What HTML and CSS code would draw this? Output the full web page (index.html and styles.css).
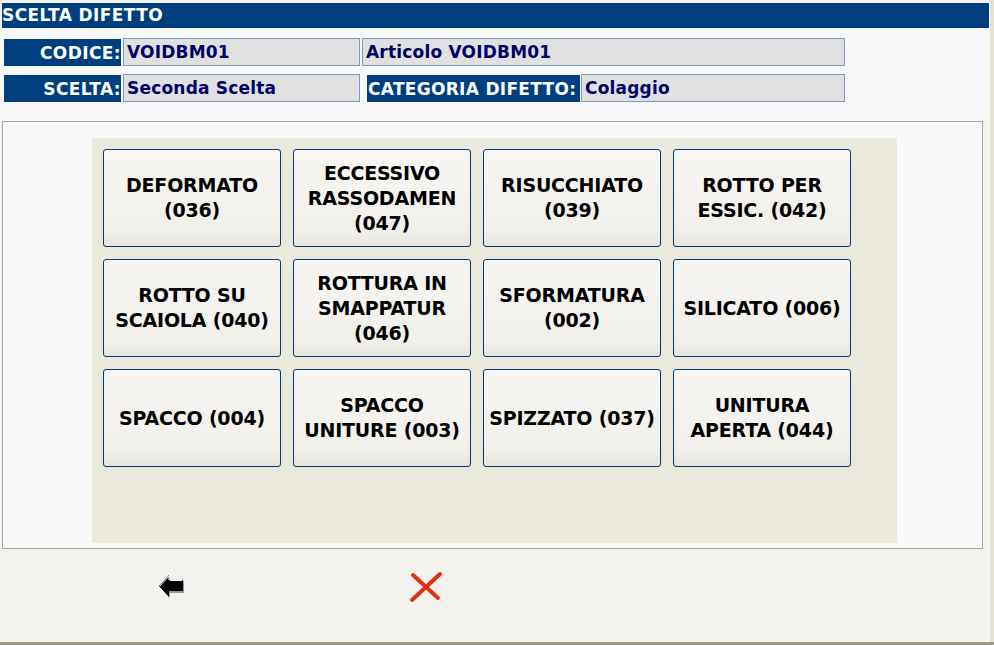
FILE: index.html
```html
<!DOCTYPE html>
<html>
<head>
<meta charset="utf-8">
<link rel="stylesheet" href="styles.css">
</head>
<body>
<div class="window">
  <div class="main">
    <div class="titlebar">SCELTA DIFETTO</div>
    <div class="fields">
      <div class="frow">
        <div class="lbl w-lbl1">CODICE:</div>
        <div class="val w-val1">VOIDBM01</div>
        <div class="val w-val2">Articolo VOIDBM01</div>
      </div>
      <div class="frow">
        <div class="lbl w-lbl1">SCELTA:</div>
        <div class="val w-val1">Seconda Scelta</div>
        <div class="lbl w-lbl2">CATEGORIA DIFETTO:</div>
        <div class="val w-val3">Colaggio</div>
      </div>
    </div>
    <div class="panel">
      <div class="grid">
        <div class="btn">DEFORMATO<br>(036)</div>
        <div class="btn">ECCESSIVO<br>RASSODAMEN<br>(047)</div>
        <div class="btn">RISUCCHIATO<br>(039)</div>
        <div class="btn">ROTTO PER<br>ESSIC. (042)</div>
        <div class="btn">ROTTO SU<br>SCAIOLA (040)</div>
        <div class="btn">ROTTURA IN<br>SMAPPATUR<br>(046)</div>
        <div class="btn">SFORMATURA<br>(002)</div>
        <div class="btn">SILICATO (006)</div>
        <div class="btn">SPACCO (004)</div>
        <div class="btn">SPACCO<br>UNITURE (003)</div>
        <div class="btn">SPIZZATO (037)</div>
        <div class="btn">UNITURA<br>APERTA (044)</div>
      </div>
    </div>
    <div class="footer">
      <div class="icon-back">
        <svg width="26" height="24" viewBox="0 0 26 24">
          <polygon points="1,12 11,1 11,6 25,6 25,18 11,18 11,23" fill="#9a9a9a"/>
          <polygon points="0,11 10,0 10,5 24,5 24,16 10,16 10,22" fill="#000"/>
          <polyline points="1,11 10,1 10,5" fill="none" stroke="#fff" stroke-width="1"/>
          <line x1="11" y1="5.5" x2="23" y2="5.5" stroke="#fff" stroke-width="1"/>
        </svg>
      </div>
      <div class="icon-close">
        <svg width="36" height="32" viewBox="0 0 36 32">
          <line x1="4" y1="29" x2="32" y2="3" stroke="#e2300e" stroke-width="4" stroke-linecap="round"/>
          <line x1="5" y1="4" x2="30" y2="27" stroke="#e2300e" stroke-width="4" stroke-linecap="round"/>
        </svg>
      </div>
    </div>
  </div>
  <div class="rightedge"></div>
</div>
</body>
</html>
```
FILE: styles.css
```css
html, body {
  margin: 0;
  padding: 0;
}
body {
  width: 994px;
  height: 645px;
  overflow: hidden;
  background: #f3f2ee;
  font-family: "DejaVu Sans", Verdana, sans-serif;
  font-weight: bold;
}
.window {
  display: flex;
  width: 994px;
  height: 645px;
  box-sizing: border-box;
  border-bottom: 3px solid #9d9a8c;
}
.main {
  width: 989px;
  display: flex;
  flex-direction: column;
  background: #f3f2ee;
}
.rightedge {
  flex: 1;
  background: #e6e2d4;
  border-left: 1px solid #fbfaf6;
}
.titlebar {
  margin: 3px 0 0 2px;
  height: 25px;
  background: #003f7f;
  color: #fff;
  font-size: 17px;
  line-height: 25px;
  letter-spacing: 0.4px;
  white-space: nowrap;
}
.fields {
  background: #f8f8fa;
  padding: 10px 0 19px 4px;
  display: flex;
  flex-direction: column;
  gap: 8px;
}
.frow {
  display: flex;
  height: 28px;
  align-items: stretch;
}
.lbl {
  background: #003f7f;
  color: #fff;
  font-size: 17px;
  text-align: right;
  line-height: 28px;
  white-space: nowrap;
  letter-spacing: 0.4px;
  margin: 1px 0 0 0;
}
.val {
  background: #e0e0e0;
  border: 1px solid #7f9db9;
  color: #000066;
  font-size: 17px;
  line-height: 26px;
  padding-left: 3px;
  box-sizing: border-box;
  white-space: nowrap;
  letter-spacing: 0.2px;
}
.w-lbl1 { width: 117px; margin-right: 2px; }
.w-val1 { width: 237px; margin-right: 2px; }
.w-val2 { width: 483px; }
.w-lbl2 { width: 213px; margin-left: 5px; margin-right: 1px; text-align: left; padding-left: 1px; box-sizing: border-box; letter-spacing: 0.3px; }
.w-val3 { width: 264px; }
.panel {
  margin-left: 2px;
  width: 981px;
  height: 428px;
  border: 1px solid #aca899;
  background: #f8f8f8;
  box-sizing: border-box;
  padding: 16px 0 4px 89px;
}
.grid {
  width: 805px;
  height: 405px;
  background: #ebe8dc;
  box-sizing: border-box;
  padding: 11px;
  display: grid;
  grid-template-columns: repeat(4, 178px);
  grid-auto-rows: 98px;
  column-gap: 12px;
  row-gap: 12px;
  align-content: start;
}
.btn {
  border: 1px solid #003c74;
  border-radius: 3px;
  background: linear-gradient(#f7f6f3, #f0efea 85%, #e6e4dc);
  color: #000;
  font-size: 19px;
  line-height: 25px;
  letter-spacing: -0.2px;
  display: flex;
  align-items: center;
  justify-content: center;
  text-align: center;
  box-sizing: border-box;
}
.footer {
  flex: 1;
  position: relative;
}
.icon-back {
  position: absolute;
  left: 159px;
  top: 26px;
}
.icon-close {
  position: absolute;
  left: 408px;
  top: 22px;
}
```
